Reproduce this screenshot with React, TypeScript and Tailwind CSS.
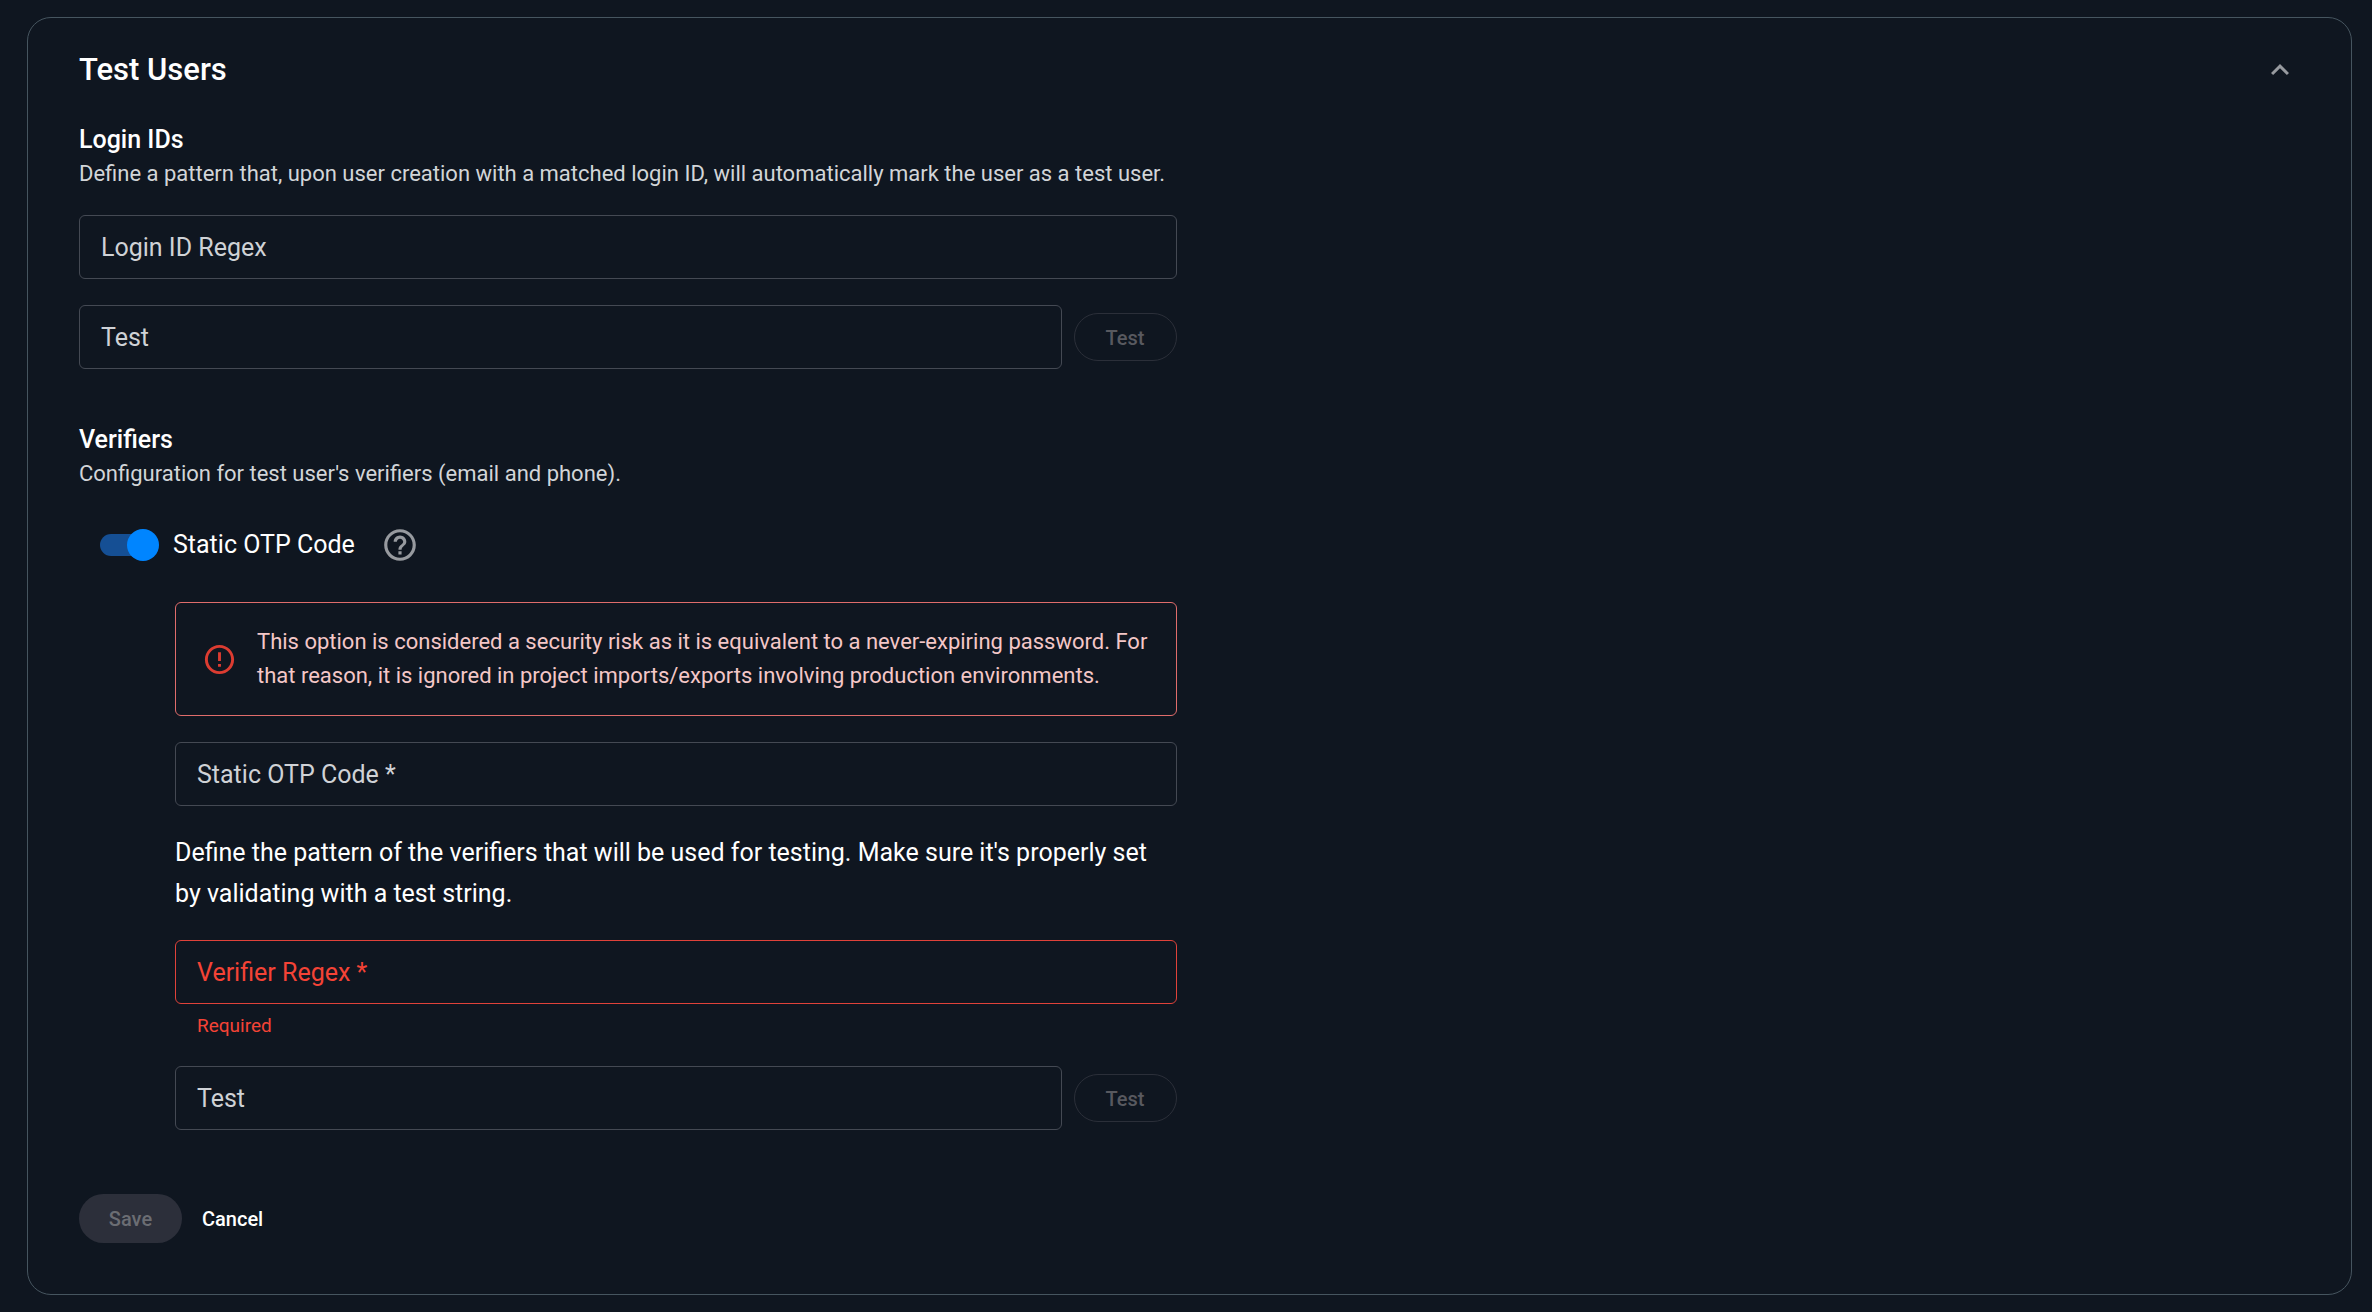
import { useState } from 'react';
import { clsx } from 'clsx';
import { MdErrorOutline, MdExpandLess, MdHelpOutline } from 'react-icons/md';

interface TextFieldProps {
  id: string;
  label: string;
  required?: boolean;
  error?: string;
}

function TextField({ id, label, required, error }: TextFieldProps) {
  return (
    <div className="flex-1">
      <div className="relative">
        <input
          id={id}
          type="text"
          placeholder=" "
          required={required}
          aria-invalid={!!error}
          className={clsx(
            'peer block w-full h-16 rounded-md border bg-transparent px-[22px] text-[25px] text-white outline-none focus:border-[#0085ff]',
            error ? 'border-[#e0423a]' : 'border-[#444953]'
          )}
        />
        <label
          htmlFor={id}
          className={clsx(
            'absolute inset-y-0 left-[22px] hidden items-center pt-px text-[25px] pointer-events-none peer-placeholder-shown:flex',
            error ? 'text-[#f44336]' : 'text-[#cfd2d6]'
          )}
        >
          {label}
          {required && ' *'}
        </label>
      </div>
      {error && <p className="mt-2 pl-[22px] text-[19px] leading-7 text-[#f44336]">{error}</p>}
    </div>
  );
}

function TestRow({ id }: { id: string }) {
  return (
    <div className="flex items-center gap-3">
      <TextField id={id} label="Test" />
      <button
        type="button"
        disabled
        className="w-[103px] h-12 rounded-full border border-[#2b2f39] pt-px text-[20px] font-medium text-[#58595f]"
      >
        Test
      </button>
    </div>
  );
}

function SectionHeading({ title, description }: { title: string; description: string }) {
  return (
    <div>
      <h3 className="text-[25px] leading-8 font-medium text-white">{title}</h3>
      <p className="mt-px text-[22px] leading-[34px] text-[#d2d5d8]">{description}</p>
    </div>
  );
}

export default function App() {
  const [open, setOpen] = useState(true);
  const [staticOtp, setStaticOtp] = useState(true);

  return (
    <main className="min-h-screen bg-[#0f1620] pt-[17px] pb-[17px] pl-[27px] pr-5 font-['Roboto',sans-serif]">
      <section className="rounded-3xl border border-[#46555f] pl-[51px] pr-[53px] pt-8 pb-[51px]">
        {/* Header */}
        <div className="flex items-center justify-between h-10">
          <h2 className="text-[31px] leading-10 font-medium text-white">Test Users</h2>
          <button
            type="button"
            aria-label="Toggle section"
            aria-expanded={open}
            onClick={() => setOpen(!open)}
            className="text-[#979a9f]"
          >
            <MdExpandLess className={clsx('size-9', !open && 'rotate-180')} />
          </button>
        </div>

        {open && (
          <form className="pt-[34px]" onSubmit={(e) => e.preventDefault()}>
            <div className="lg:w-1/2 lg:pr-3">
              {/* Login IDs */}
              <SectionHeading
                title="Login IDs"
                description="Define a pattern that, upon user creation with a matched login ID, will automatically mark the user as a test user."
              />
              <div className="mt-6 flex flex-col gap-[26px]">
                <TextField id="login-regex" label="Login ID Regex" />
                <TestRow id="login-test" />
              </div>

              {/* Verifiers */}
              <div className="mt-[55px]">
                <SectionHeading
                  title="Verifiers"
                  description="Configuration for test user's verifiers (email and phone)."
                />
              </div>
              <div className="mt-[38px] flex items-center pl-[21px]">
                <label className="flex items-center gap-[14px] text-[25px] leading-8 text-white cursor-pointer">
                  <span className="relative flex items-center w-[59px] h-8">
                    <input
                      type="checkbox"
                      role="switch"
                      checked={staticOtp}
                      onChange={(e) => setStaticOtp(e.target.checked)}
                      className="peer appearance-none w-[54px] h-[22px] rounded-full bg-[#3b414c] checked:bg-[#154f94] cursor-pointer"
                    />
                    <span className="absolute left-0 size-8 rounded-full bg-[#979a9f] pointer-events-none peer-checked:left-auto peer-checked:right-0 peer-checked:bg-[#0085ff]" />
                  </span>
                  Static OTP Code
                </label>
                <MdHelpOutline className="ml-[26px] -my-1 size-[38px] text-[#979a9f]" />
              </div>

              {staticOtp && (
                <div className="mt-[41px] flex flex-col gap-[26px] pl-24">
                  <div role="alert" className="flex items-center gap-5 rounded-md border border-[#e06c6b] px-[26px] py-[22px]">
                    <MdErrorOutline className="size-[35px] shrink-0 text-[#dc3c31]" />
                    <p className="text-[22px] leading-[34px] text-[#f4c7c7]">
                      This option is considered a security risk as it is equivalent to a never-expiring password. For
                      that reason, it is ignored in project imports/exports involving production environments.
                    </p>
                  </div>
                  <TextField id="otp-code" label="Static OTP Code" required />
                  <p className="text-[25px] leading-[41px] text-white">
                    Define the pattern of the verifiers that will be used for testing. Make sure it's properly set by
                    validating with a test string.
                  </p>
                  <TextField id="verifier-regex" label="Verifier Regex" required error="Required" />
                  <TestRow id="verifier-test" />
                </div>
              )}
            </div>

            {/* Actions */}
            <div className="mt-16 flex items-center gap-5">
              <button
                type="submit"
                disabled
                className="w-[103px] h-[49px] rounded-full bg-[#2c2f3a] pt-px text-[20px] font-medium text-[#6b6d73]"
              >
                Save
              </button>
              <button type="button" className="h-[49px] pt-px text-[20px] font-medium text-white">
                Cancel
              </button>
            </div>
          </form>
        )}
      </section>
    </main>
  );
}
